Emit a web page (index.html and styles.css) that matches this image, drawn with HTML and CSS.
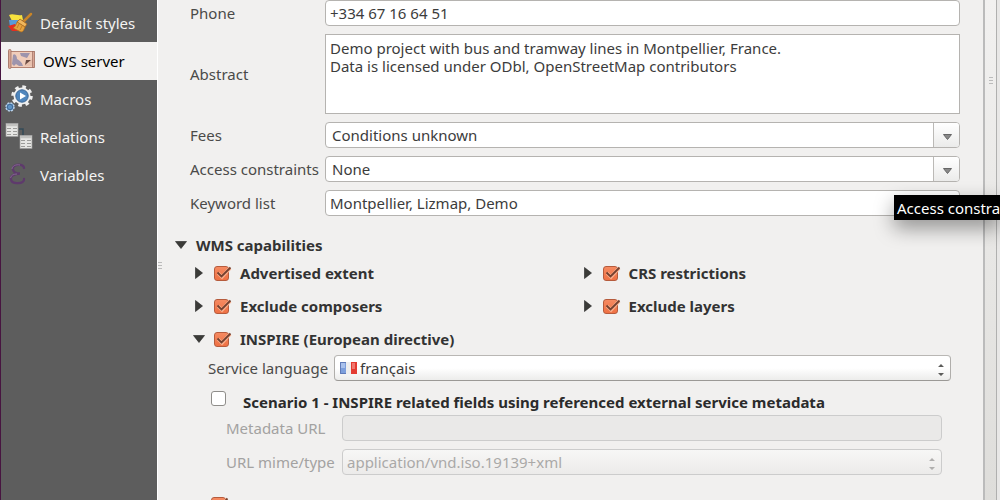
FILE: index.html
```html
<!DOCTYPE html>
<html lang="en">
<head>
<meta charset="utf-8">
<title>Project properties</title>
<link rel="stylesheet" href="styles.css">
</head>
<body>
<svg class="defs" aria-hidden="true">
  <symbol id="right" viewBox="0 0 8 12"><path d="M0.5 0.5V11.5L7.5 6Z" fill="#3b3b38" stroke="#222" stroke-width=".6"/></symbol>
  <symbol id="down" viewBox="0 0 12 8"><path d="M0.5 0.5H11.5L6 7.5Z" fill="#3b3b38" stroke="#222" stroke-width=".6"/></symbol>
  <symbol id="spin" viewBox="0 0 6 14"><path d="M0 4L3 1L6 4ZM0 10H6L3 13Z" fill="currentColor"/></symbol>
  <symbol id="tick" viewBox="0 0 18 16"><path d="M4 7L8 11L16 2" fill="none" stroke="#f9ae8c" stroke-width="3.5"/><path d="M3.500 6.500L7.500 10.500L16.500 1.500" fill="none" stroke="#74402f" stroke-width="1.8"/></symbol>
</svg>
<div class="window">
  <nav class="sidebar">
    <a class="item" href="#styles">
      <svg class="icon" viewBox="0 0 28 28"><path d="M4 6C8 4 12 7 17 6L18 11L7 12Z" fill="#f7e23e"/><path d="M4 11L14 11L15 17L5 18Z" fill="#5a9bd8"/><path d="M3 17L10 15L15 22L7 22Z" fill="#e52d20"/><path d="M26 5L19 12" stroke="#c98528" stroke-width="2.500" stroke-linecap="round"/><path d="M15 10L22 15L20 18L12 13Z" fill="#f0b65c" stroke="#a8651c" stroke-width=".8"/><path d="M12 13L20 18C19 21 18 23 16 23L8 19C10 18 11 16 12 13Z" fill="#e8a33e" stroke="#ae6c1d" stroke-width=".7"/><path d="M14 15L12 19M17 17L15 21" stroke="#b97420" stroke-width=".8"/></svg>
      <span>Default styles</span></a>
    <a class="item selected" href="#ows" aria-current="page">
      <svg class="icon wide" viewBox="0 0 31 28"><rect x="4" y="4.500" width="25" height="16" fill="#f0cdbb" stroke="#b58373"/><path d="M8 8C10 6 12 9 12 12C14 13 17 15 18 19H14L11 17L9 19L7 17ZM15 6H25L22 11L16 9Z" fill="#9d94ad"/><path d="M19 19L28 11V19Z" fill="#e8c1ae"/><path d="M20 18L21 13L26 13Z" fill="#6b4b42"/><rect x="3.500" y="2.500" width="2.500" height="19" rx="1" fill="#d9a693" stroke="#9f7062" stroke-width=".8"/><rect x="27.500" y="4.500" width="2" height="16" fill="#d9a693" stroke="#9f7062" stroke-width=".7"/></svg>
      <span>OWS server</span></a>
    <a class="item" href="#macros">
      <svg class="icon" viewBox="0 0 28 28"><circle cx="17" cy="11" r="9" fill="none" stroke="#eee" stroke-width="3.500" stroke-dasharray="3.500 3.570"/><circle cx="17" cy="11" r="8.500" fill="#f0f0f0"/><circle cx="17" cy="11" r="6.200" fill="#4f86bd" stroke="#3b6796"/><path d="M15 7.500L21 11L15 14.500Z" fill="#fff"/><circle cx="5" cy="22" r="4" fill="#6b9acb" stroke="#b9d1e8" stroke-width="1.500" stroke-dasharray="2 1.140"/><circle cx="5" cy="22" r="2.700" fill="#5c92c5" stroke="#426b97"/></svg>
      <span>Macros</span></a>
    <a class="item" href="#relations">
      <svg class="icon" viewBox="0 0 28 28"><path d="M14 6H18V13" fill="none" stroke="#344b58" stroke-width="1.500"/><g id="tbl"><rect x="1" y="0.500" width="12" height="13" fill="#e6e6e4" stroke="#999" stroke-width=".7"/><path d="M1 2H13" stroke="#c2c2c0" stroke-width="2.500"/><path d="M2 5.500H6M8 5.500H12M2 8.500H6M8 8.500H12M2 11.500H6M8 11.500H12" stroke="#9b9b99"/></g><use href="#tbl" x="14" y="12"/></svg>
      <span>Relations</span></a>
    <a class="item" href="#variables">
      <svg class="icon" viewBox="0 0 28 28"><path d="M19 7C19 2 7 3 8 8C8 11 11 12.500 15 12.500C9 12.500 5 15 6 18.500C7 24 20 23 19 18" fill="none" stroke="#5e3a6c" stroke-width="2.300" stroke-linecap="round"/><path d="M7 8C7 5 11 3 15 4M5.500 17C6 14 9 13 12 13" fill="none" stroke="#927a9e" stroke-width=".7"/></svg>
      <span>Variables</span></a>
  </nav>
  <div class="splitter"><i class="grip"></i></div>
  <main class="content">
    <form class="fields">
      <label for="phone">Phone</label><input class="box" id="phone" value="+334 67 16 64 51">
      <label for="abstract">Abstract</label><textarea class="box area" id="abstract">Demo project with bus and tramway lines in Montpellier, France.
Data is licensed under ODbl, OpenStreetMap contributors</textarea>
      <label for="fees">Fees</label>
      <div class="box combo"><input id="fees" value="Conditions unknown"><button type="button" aria-label="Show fees"><svg width="9" height="6" viewBox="0 0 9 6"><path d="M.5.5H8.500L4.500 5.500Z" fill="#888" stroke="#666"/></svg></button></div>
      <label for="access">Access constraints</label>
      <div class="box combo"><input id="access" value="None"><button type="button" aria-label="Show access constraints"><svg width="9" height="6" viewBox="0 0 9 6"><path d="M.5.5H8.500L4.500 5.500Z" fill="#888" stroke="#666"/></svg></button></div>
      <label for="keywords">Keyword list</label><input class="box" id="keywords" value="Montpellier, Lizmap, Demo">
    </form>
    <section class="wms">
      <h2 class="heading"><button type="button" class="toggle" aria-label="Collapse WMS capabilities"><svg width="12" height="8"><use href="#down"/></svg></button>WMS capabilities</h2>
      <div class="groups">
        <div class="group"><button type="button" class="toggle" aria-label="Expand advertised extent"><svg width="8" height="12"><use href="#right"/></svg></button><span class="check"><input type="checkbox" id="extent" checked><svg><use href="#tick"/></svg></span><label for="extent">Advertised extent</label></div>
        <div class="group"><button type="button" class="toggle" aria-label="Expand CRS restrictions"><svg width="8" height="12"><use href="#right"/></svg></button><span class="check"><input type="checkbox" id="crs" checked><svg><use href="#tick"/></svg></span><label for="crs">CRS restrictions</label></div>
        <div class="group"><button type="button" class="toggle" aria-label="Expand exclude composers"><svg width="8" height="12"><use href="#right"/></svg></button><span class="check"><input type="checkbox" id="composers" checked><svg><use href="#tick"/></svg></span><label for="composers">Exclude composers</label></div>
        <div class="group"><button type="button" class="toggle" aria-label="Expand exclude layers"><svg width="8" height="12"><use href="#right"/></svg></button><span class="check"><input type="checkbox" id="layers" checked><svg><use href="#tick"/></svg></span><label for="layers">Exclude layers</label></div>
        <div class="group"><button type="button" class="toggle" aria-label="Collapse INSPIRE"><svg width="12" height="8"><use href="#down"/></svg></button><span class="check"><input type="checkbox" id="inspire" checked><svg><use href="#tick"/></svg></span><label for="inspire">INSPIRE (European directive)</label></div>
      </div>
      <div class="language">
        <label for="language">Service language</label>
        <div class="choice"><select class="box flagged" id="language"><option>français</option></select>
          <svg class="flag" viewBox="0 0 17 12"><path d="M0 0H6V12H0Z" fill="#7d9fdc"/><path d="M6 0H11V12H6Z" fill="#eee"/><path d="M11 0H17V12H11Z" fill="#e33b32"/><path d="M1 1H5V6H1Z" fill="#a9c1ec"/><path d="M12 1H15V7H12Z" fill="#f0786f"/><path d="M.5.5H6M.5.5V11.500H6" fill="none" stroke="#4d64a0" stroke-opacity=".6"/></svg>
          <svg class="spin"><use href="#spin"/></svg></div>
      </div>
      <div class="scenario"><input type="checkbox" id="scenario"><label for="scenario">Scenario 1 - INSPIRE related fields using referenced external service metadata</label></div>
      <div class="metadata">
        <label for="url">Metadata URL</label><input class="box" id="url" disabled>
        <label for="mime">URL mime/type</label>
        <div class="choice"><select class="box" id="mime" disabled><option>application/vnd.iso.19139+xml</option></select><svg class="spin"><use href="#spin"/></svg></div>
      </div>
      <div class="next"><span class="check"><input type="checkbox" aria-label="Next scenario" checked><svg><use href="#tick"/></svg></span></div>
    </section>
  </main>
  <div class="edge"><i class="grip"></i></div>
  <div class="outside"></div>
  <div class="tooltip" role="tooltip">Access constra</div>
</div>
</body>
</html>
```
FILE: styles.css
```css
* { box-sizing: border-box; }
body {
  margin: 0;
  background: #f1f0ef;
  color: #4a4a49;
  font: 15px/18px "Noto Sans", "Open Sans", sans-serif;
}
input, textarea, select, button { font: inherit; color: inherit; margin: 0; }
.defs { position: absolute; width: 0; height: 0; }
.window {
  position: relative;
  display: flex;
  height: 100vh;
  overflow: hidden;
  border-left: 1px solid #471440;
}
.sidebar {
  flex: none;
  width: 156px;
  padding-top: 4px;
  background: #5d5d5d;
}
.item {
  display: flex;
  align-items: center;
  gap: 7px;
  height: 38px;
  padding-left: 4px;
  color: #f4f4f3;
  text-decoration: none;
  white-space: nowrap;
}
.selected { background: #f2f1f0; color: #000; }
.icon { flex: none; width: 28px; height: 28px; }
.wide { width: 31px; }
.splitter {
  flex: none;
  display: flex;
  align-items: center;
  width: 6px;
  padding-top: 30px;
  border-left: 1px solid #fff;
}
.grip {
  width: 4px;
  height: 7px;
  background: repeating-linear-gradient(#bbb 0 1px, transparent 1px 3px);
}
.content { flex: 1; min-width: 0; padding: 0 23px 0 12px; }
.fields {
  display: grid;
  grid-template-columns: 135px 1fr;
  row-gap: 8px;
  align-items: center;
  padding-left: 15px;
}
label { white-space: nowrap; }
.box {
  width: 100%;
  min-width: 0;
  height: 26px;
  padding: 0 4px;
  border: 1px solid #b5b3b0;
  border-radius: 4px;
  background: #fff;
  color: #3c3c3c;
}
.area {
  display: block;
  height: 80px;
  padding: 4px;
  border-radius: 0;
  resize: none;
  overflow: hidden;
}
.combo { display: flex; padding: 0; overflow: hidden; }
.combo input { flex: 1; min-width: 0; padding: 0 6px; border: 0; background: none; }
.combo button {
  display: flex;
  align-items: center;
  justify-content: center;
  width: 26px;
  padding: 4px 0 0 2px;
  border: 0;
  border-left: 1px solid #bbb9b6;
  background: linear-gradient(#fff, #ebebea);
}
.wms { padding: 20px 0 0; color: #333; }
.heading {
  display: flex;
  align-items: center;
  gap: 9px;
  margin: 0;
  font: bold 15px/18px "Noto Sans", "Open Sans", sans-serif;
}
.toggle {
  display: flex;
  align-items: center;
  justify-content: center;
  width: 12px;
  height: 18px;
  padding: 0;
  border: 0;
  background: none;
}
.groups {
  display: grid;
  grid-template-columns: 1fr 1fr;
  gap: 15px 10px;
  padding: 10px 0 0 18px;
  font-weight: bold;
}
.group { display: flex; align-items: center; }
.check { position: relative; display: flex; margin: 0 11px 0 9px; }
.check input {
  appearance: none;
  width: 15px;
  height: 15px;
  border: 1px solid #b65b3c;
  border-radius: 3px;
  background: linear-gradient(#f58a61, #ef7144);
}
.check svg { position: absolute; left: 0; top: 0; width: 18px; height: 16px; pointer-events: none; }
.language {
  display: grid;
  grid-template-columns: 126px 1fr;
  align-items: center;
  padding: 7px 9px 0 33px;
  color: #4a4a49;
}
.choice { position: relative; }
.choice select {
  display: block;
  appearance: none;
  background: linear-gradient(#fff 50%, #ececeb);
  border-color: #b9b7b4 #b0aeab #9b9996;
}
.choice .flagged { padding-left: 25px; }
.flag { position: absolute; left: 6px; top: 7px; width: 17px; height: 12px; }
.spin { position: absolute; right: 7px; top: 8px; width: 6px; height: 14px; color: #5c5c5a; pointer-events: none; }
.scenario {
  display: flex;
  align-items: flex-end;
  gap: 17px;
  padding: 10px 0 0 36px;
  font-weight: bold;
  color: #2b2b2b;
}
.scenario input {
  appearance: none;
  width: 15px;
  height: 15px;
  margin-bottom: 5px;
  border: 1px solid #8f8d8a;
  border-radius: 3px;
  background: #fff;
}
.metadata {
  display: grid;
  grid-template-columns: 116px 1fr;
  row-gap: 8px;
  align-items: center;
  padding: 4px 18px 0 51px;
  color: #a3a2a1;
}
.metadata .box {
  border-color: #ccc;
  background: #eae9e8;
  color: #aaa9a8;
  opacity: 1;
}
.metadata select.box { background: linear-gradient(#f7f7f6, #ecebea); }
.metadata .spin { color: #b0afae; }
.next { padding: 22px 0 0 27px; }
.edge {
  flex: none;
  display: flex;
  justify-content: center;
  width: 14px;
  padding-top: 77px;
  border-left: 2px solid #bbb;
  border-right: 1px solid #b0b0af;
  background: linear-gradient(#f2f1f0, #deddda);
}
.outside { flex: none; width: 3px; background: #e8e7e6; }
.tooltip {
  position: absolute;
  left: calc(100% - 106px);
  right: 0;
  top: 195px;
  padding: 4px 0 3px 3px;
  background: #000;
  color: #fff;
  white-space: nowrap;
  box-shadow: 0 8px 20px rgba(0, 0, 0, .4);
}
```
